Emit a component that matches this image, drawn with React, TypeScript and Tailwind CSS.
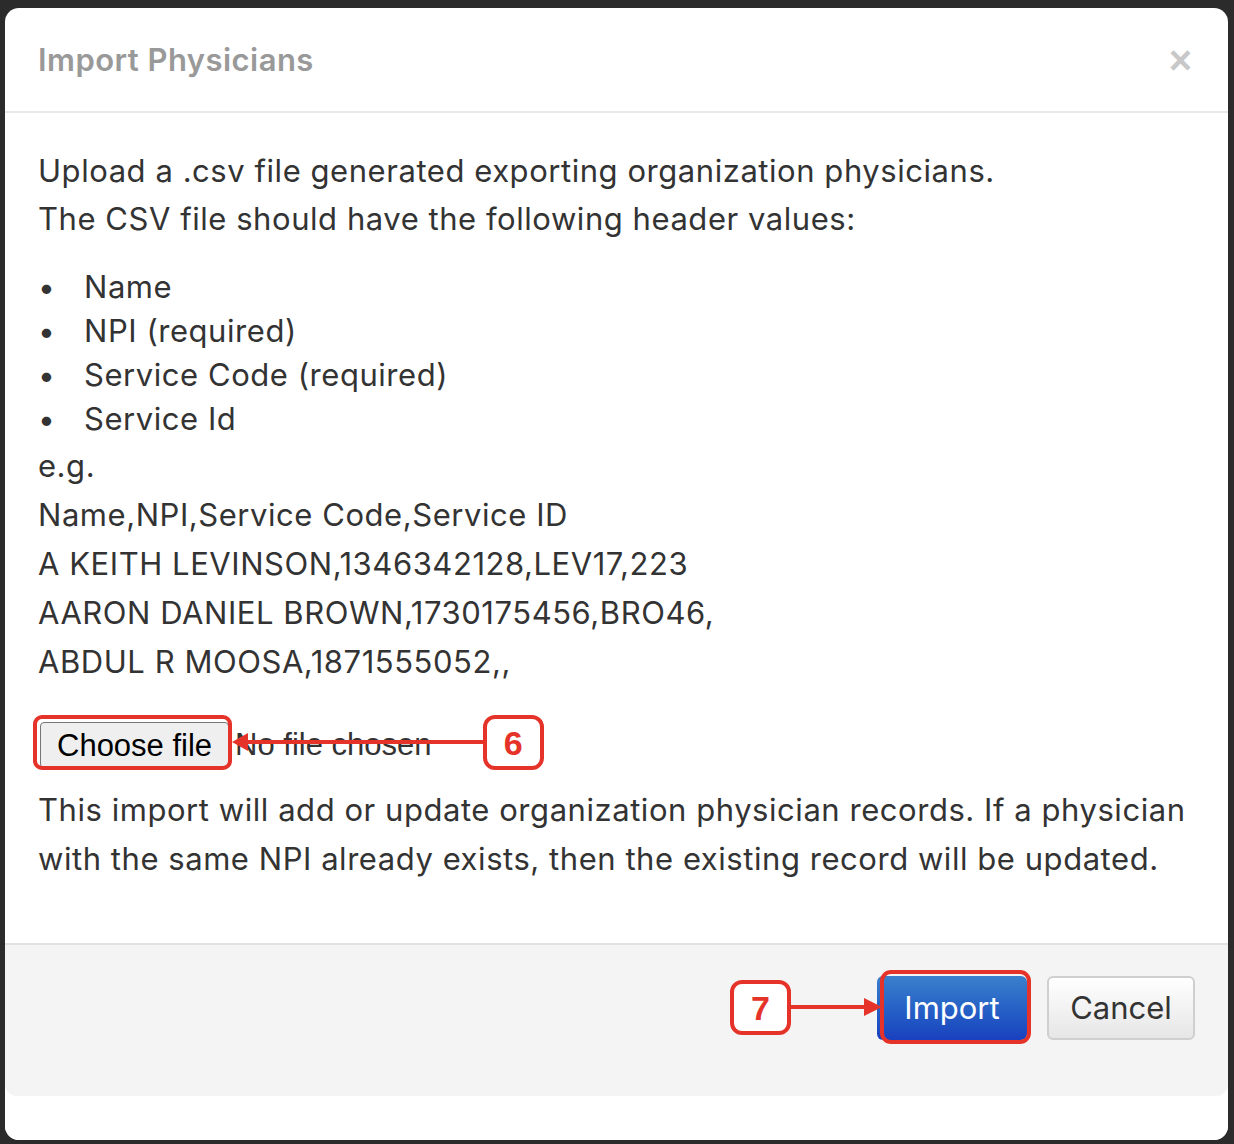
import React from "react";

const font = { fontFamily: "Inter, 'Open Sans', sans-serif" };
const arial = { fontFamily: "'Liberation Sans', Arial, sans-serif" };

// red annotation badge with a number in it
const Badge = ({ n, className }: { n: string; className: string }) => (
  <div
    className={
      "absolute flex items-center justify-center rounded-[12px] border-[4px] border-[#e5332a] bg-white text-[34px] font-extrabold leading-none text-[#e5332a] " +
      className
    }
    style={arial}
  >
    {n}
  </div>
);

export default function App() {
  return (
    <div className="flex h-[1144px] w-[1234px] bg-[#2b2b2b] pb-[4px] pl-[5px] pr-[6px] pt-[8px]" style={font}>
      <div className="flex flex-1 flex-col overflow-hidden rounded-[14px] bg-white">
        {/* header */}
        <div className="flex h-[105px] items-center justify-between border-b-2 border-[#e8e8e8] pl-[33px] pr-[36px]">
          <h1 className="pt-[2px] text-[31px] font-semibold tracking-[0.45px] text-[#999999]">Import Physicians</h1>
          <span className="text-[40px] font-bold leading-none text-[#c8c8c8]" style={arial}>
            ×
          </span>
        </div>

        {/* body */}
        <div className="relative flex-1 pl-[33px] pr-[30px] pt-[34px] text-[31px] tracking-[0.55px] text-[#333333]">
          <p className="leading-[48px]">
            Upload a .csv file generated exporting organization physicians.
            <br />
            The CSV file should have the following header values:
          </p>
          <ul className="mt-[22px] leading-[44px]">
            {["Name", "NPI (required)", "Service Code (required)", "Service Id"].map((item) => (
              <li key={item} className="flex items-center">
                <span className="w-[46px] text-[30px]">•</span>
                {item}
              </li>
            ))}
          </ul>
          <div className="leading-[49px]">
            <div>e.g.</div>
            <div>Name,NPI,Service Code,Service ID</div>
            <div>A KEITH LEVINSON,1346342128,LEV17,223</div>
            <div>AARON DANIEL BROWN,1730175456,BRO46,</div>
            <div>ABDUL R MOOSA,1871555052,,</div>
          </div>

          <div className="mt-[36px] flex items-center text-[31px] tracking-normal" style={arial}>
            <button className="ml-[2px] h-[46px] rounded-[4px] border border-[#767676] bg-[#efefef] px-[16px] text-black">
              Choose file
            </button>
            <span className="ml-[6px] text-[#333333]">No file chosen</span>
          </div>

          <p className="mt-[16px] leading-[49px]">
            This import will add or update organization physician records. If a physician
            <br />
            with the same NPI already exists, then the existing record will be updated.
          </p>

          {/* annotation 6 */}
          <div className="absolute left-[28px] top-[602px] h-[55px] w-[199px] rounded-[9px] border-[4px] border-[#e5332a]" />
          <svg className="absolute left-[225px] top-[614px]" width="260" height="30">
            <line x1="14" y1="15" x2="260" y2="15" stroke="#e5332a" strokeWidth="4" />
            <polygon points="2,15 18,6 18,24" fill="#e5332a" />
          </svg>
          <Badge n="6" className="left-[478px] top-[602px] h-[55px] w-[61px]" />
        </div>

        {/* footer */}
        <div className="relative flex h-[153px] items-start justify-end gap-[20px] rounded-b-[12px] border-t-2 border-[#e2e2e2] bg-[#f4f4f4] pr-[33px] pt-[31px]">
          <button className="h-[64px] w-[150px] rounded-[6px] bg-gradient-to-b from-[#3b80cc] to-[#1a40bf] text-[31px] text-white">
            Import
          </button>
          <button className="h-[64px] w-[148px] rounded-[6px] border-2 border-[#cfcfcf] bg-gradient-to-b from-white to-[#e6e6e6] text-[31px] text-[#333333]">
            Cancel
          </button>

          {/* annotation 7 */}
          <div className="absolute left-[875px] top-[25px] h-[74px] w-[151px] rounded-[11px] border-[4px] border-[#e5332a]" />
          <svg className="absolute left-[785px] top-[47px]" width="95" height="30">
            <line x1="0" y1="15" x2="80" y2="15" stroke="#e5332a" strokeWidth="4" />
            <polygon points="92,15 74,6 74,24" fill="#e5332a" />
          </svg>
          <Badge n="7" className="left-[725px] top-[35px] h-[55px] w-[61px]" />
        </div>
        <div className="h-[44px] bg-white" />
      </div>
    </div>
  );
}
